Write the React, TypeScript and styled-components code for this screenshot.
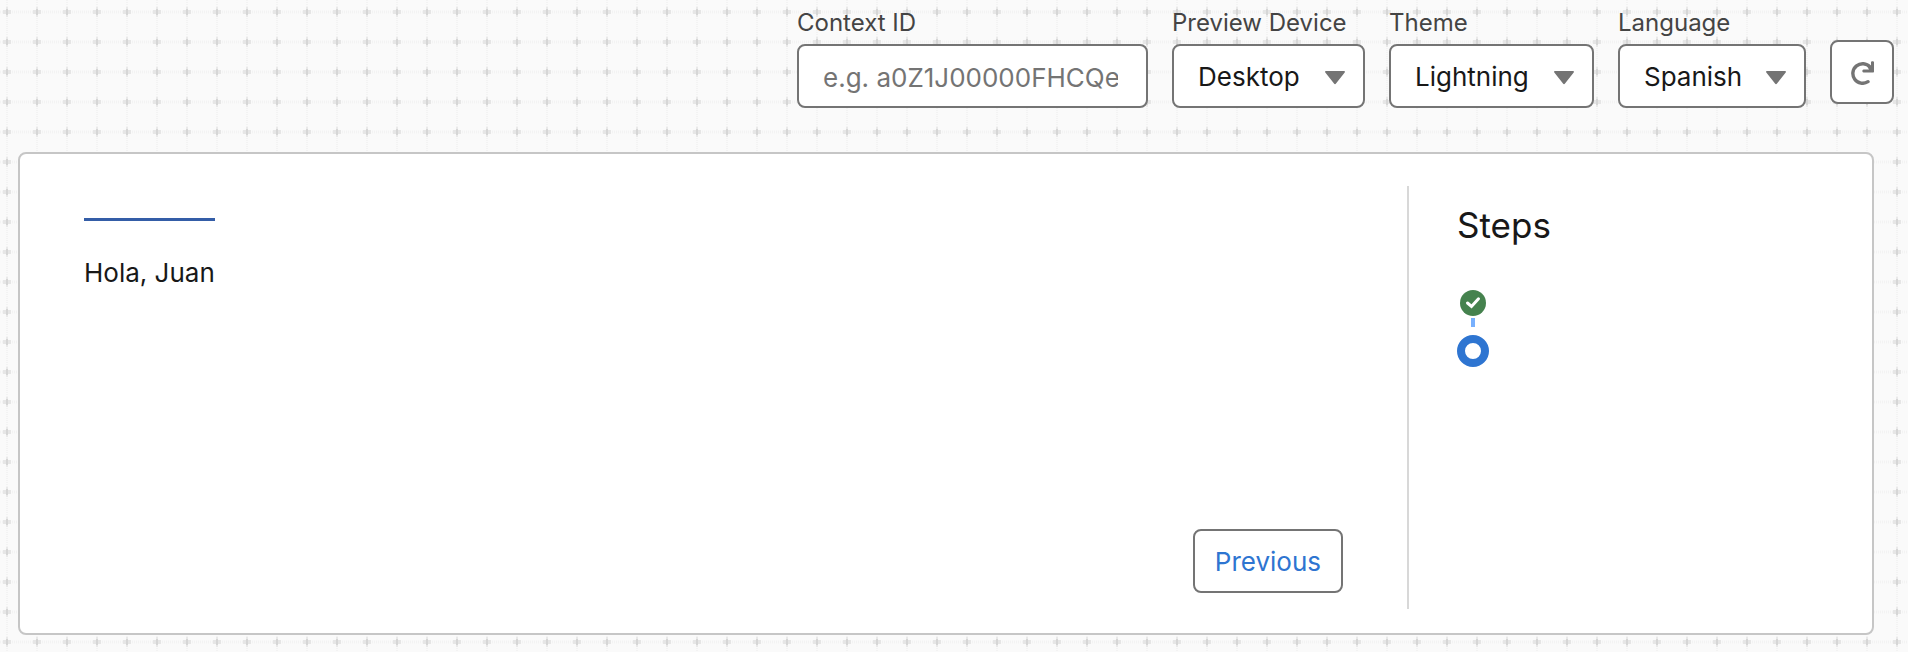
import React, { useState } from "react";
import styled, { createGlobalStyle } from "styled-components";

const GlobalStyle = createGlobalStyle`
  *, *::before, *::after { box-sizing: border-box; }
  body {
    margin: 0;
    background: #fafafa;
    color: #181818;
    font-family: Inter, "Liberation Sans", sans-serif;
    font-size: 26px;
    line-height: 32px;
  }
`;

const Page = styled.div`
  position: relative;
  min-height: 100vh;
`;

const Backdrop = styled.svg`
  position: absolute;
  inset: 0;
  width: 100%;
  height: 100%;
`;

const Toolbar = styled.header`
  position: relative;
  display: flex;
  justify-content: flex-end;
  align-items: flex-end;
  gap: 24px;
  padding: 8px 14px 0 18px;
`;

const Field = styled.div<{ $width: number }>`
  display: flex;
  flex-direction: column;
  gap: 6px;
  width: ${(p) => p.$width}px;
`;

const Label = styled.label`
  font-size: 24px;
  line-height: 30px;
  color: #444444;
  white-space: nowrap;
`;

const TextInput = styled.input`
  width: 100%;
  height: 64px;
  padding: 2px 28px 0 24px;
  border: 2px solid #747474;
  border-radius: 8px;
  background: #ffffff;
  color: #181818;
  font: inherit;
  &::placeholder { color: #747474; opacity: 1; }
`;

const SelectWrap = styled.div`
  position: relative;
`;

const Select = styled.select`
  appearance: none;
  display: block;
  width: 100%;
  height: 64px;
  padding: 2px 48px 0 24px;
  border: 2px solid #747474;
  border-radius: 8px;
  background: #ffffff;
  color: #181818;
  font: inherit;
`;

const Caret = styled.svg`
  position: absolute;
  top: 27px;
  right: 20px;
  width: 20px;
  height: 14px;
  fill: #747474;
  pointer-events: none;
`;

const Button = styled.button`
  height: 64px;
  padding: 2px 20px 0;
  border: 2px solid #747474;
  border-radius: 8px;
  background: #ffffff;
  color: #2e75d1;
  font: inherit;
  cursor: pointer;
`;

const IconButton = styled(Button)`
  display: flex;
  align-items: center;
  justify-content: center;
  width: 64px;
  padding: 0;
  margin-bottom: 4px;
`;

const Card = styled.main`
  position: relative;
  display: flex;
  min-height: 483px;
  margin: 44px 34px 16px 18px;
  padding: 32px 0 24px;
  border: 2px solid #c6c6c6;
  border-radius: 8px;
  background: #ffffff;
`;

const Content = styled.section`
  display: flex;
  flex: 1;
  flex-direction: column;
  justify-content: space-between;
  align-items: flex-start;
  padding: 32px 64px 16px;
`;

const Greeting = styled.p`
  margin: 0;
  padding-top: 36px;
  border-top: 3px solid #345da7;
`;

const Actions = styled.div`
  align-self: flex-end;
`;

const Sidebar = styled.aside`
  box-sizing: content-box;
  flex: 0 0 calc(25% - 48px);
  padding-left: 48px;
  border-left: 2px solid #d8d8d8;
`;

const Title = styled.h2`
  margin: 0;
  padding-top: 16px;
  font-size: 35px;
  font-weight: 400;
  line-height: 46px;
`;

const StepList = styled.ol`
  display: flex;
  flex-direction: column;
  align-items: center;
  width: 32px;
  margin: 42px 0 0;
  padding: 0;
  list-style: none;
`;

const DoneStep = styled.li`
  display: flex;
  flex-direction: column;
  align-items: center;
  gap: 2px;
  height: 45px;
  &::after {
    content: "";
    width: 4px;
    height: 9px;
    background: #78b0fd;
  }
`;

const CurrentStep = styled.li`
  width: 32px;
  height: 32px;
  border: 8px solid #2e75d1;
  border-radius: 50%;
`;

type Choice = { id: string; label: string; width: number; options: string[] };

const choices: Choice[] = [
  { id: "device", label: "Preview Device", width: 193, options: ["Desktop"] },
  { id: "theme", label: "Theme", width: 205, options: ["Lightning"] },
  { id: "language", label: "Language", width: 188, options: ["Spanish"] },
];

function SelectField({ id, label, width, options }: Choice) {
  const [value, setValue] = useState(options[0]);
  return (
    <Field $width={width}>
      <Label htmlFor={id}>{label}</Label>
      <SelectWrap>
        <Select id={id} value={value} onChange={(e) => setValue(e.target.value)}>
          {options.map((o) => (
            <option key={o}>{o}</option>
          ))}
        </Select>
        <Caret viewBox="0 0 20 14" aria-hidden="true">
          <path d="M1 0h18c.9 0 1.3.8.7 1.4L11 12.6c-.6.7-1.4.7-2 0L.3 1.4C-.3.8.1 0 1 0z" />
        </Caret>
      </SelectWrap>
    </Field>
  );
}

export default function App() {
  return (
    <>
      <GlobalStyle />
      <Page>
        <Backdrop aria-hidden="true">
          <defs>
            <pattern id="grid" width="30" height="30" patternUnits="userSpaceOnUse">
              <path d="M0 12H30" stroke="#f3f3f3" strokeWidth="3" strokeDasharray="1 1" />
              <path d="M7 0V30" stroke="#f3f3f3" strokeWidth="2" strokeDasharray="1 1" />
              <path d="M3 12H11" stroke="#e6e6e6" strokeWidth="4" />
              <path d="M7 7V17" stroke="#e9e9e9" strokeWidth="2" />
              <path d="M7 9V15" stroke="#d6d6d6" strokeWidth="2" />
            </pattern>
          </defs>
          <rect width="100%" height="100%" fill="url(#grid)" />
        </Backdrop>
        <Toolbar>
          <Field $width={351}>
            <Label htmlFor="context">Context ID</Label>
            <TextInput id="context" type="text" placeholder="e.g. a0Z1J00000FHCQe" />
          </Field>
          {choices.map((c) => (
            <SelectField key={c.id} {...c} />
          ))}
          <IconButton type="button" aria-label="Refresh">
            <svg width="24" height="26" viewBox="0 0 24 26" fill="none" aria-hidden="true">
              <path d="M18 22.7A9.8 9.8 0 1 1 20 8" stroke="#747474" strokeWidth="3.4" strokeLinecap="round" />
              <path d="M21 3.2c0-1.4 3-1.4 3 0V12.4c0 .7-.4 1.1-1.100 1.100H13.500c-1.500 0-1.500-3 0-3H19L17.800 8.500 21 7z" fill="#747474" />
            </svg>
          </IconButton>
        </Toolbar>
        <Card>
          <Content>
            <Greeting>Hola, Juan</Greeting>
            <Actions>
              <Button type="button">Previous</Button>
            </Actions>
          </Content>
          <Sidebar>
            <Title>Steps</Title>
            <StepList>
              <DoneStep>
                <svg width="26" height="26" viewBox="0 0 26 26" role="img" aria-label="Completed">
                  <circle cx="13" cy="13" r="13" fill="#45824e" />
                  <path d="M7.500 13L11.500 16.500L18.500 8.800" fill="none" stroke="#ffffff" strokeWidth="3" strokeLinecap="round" />
                </svg>
              </DoneStep>
              <CurrentStep aria-current="step" />
            </StepList>
          </Sidebar>
        </Card>
      </Page>
    </>
  );
}
